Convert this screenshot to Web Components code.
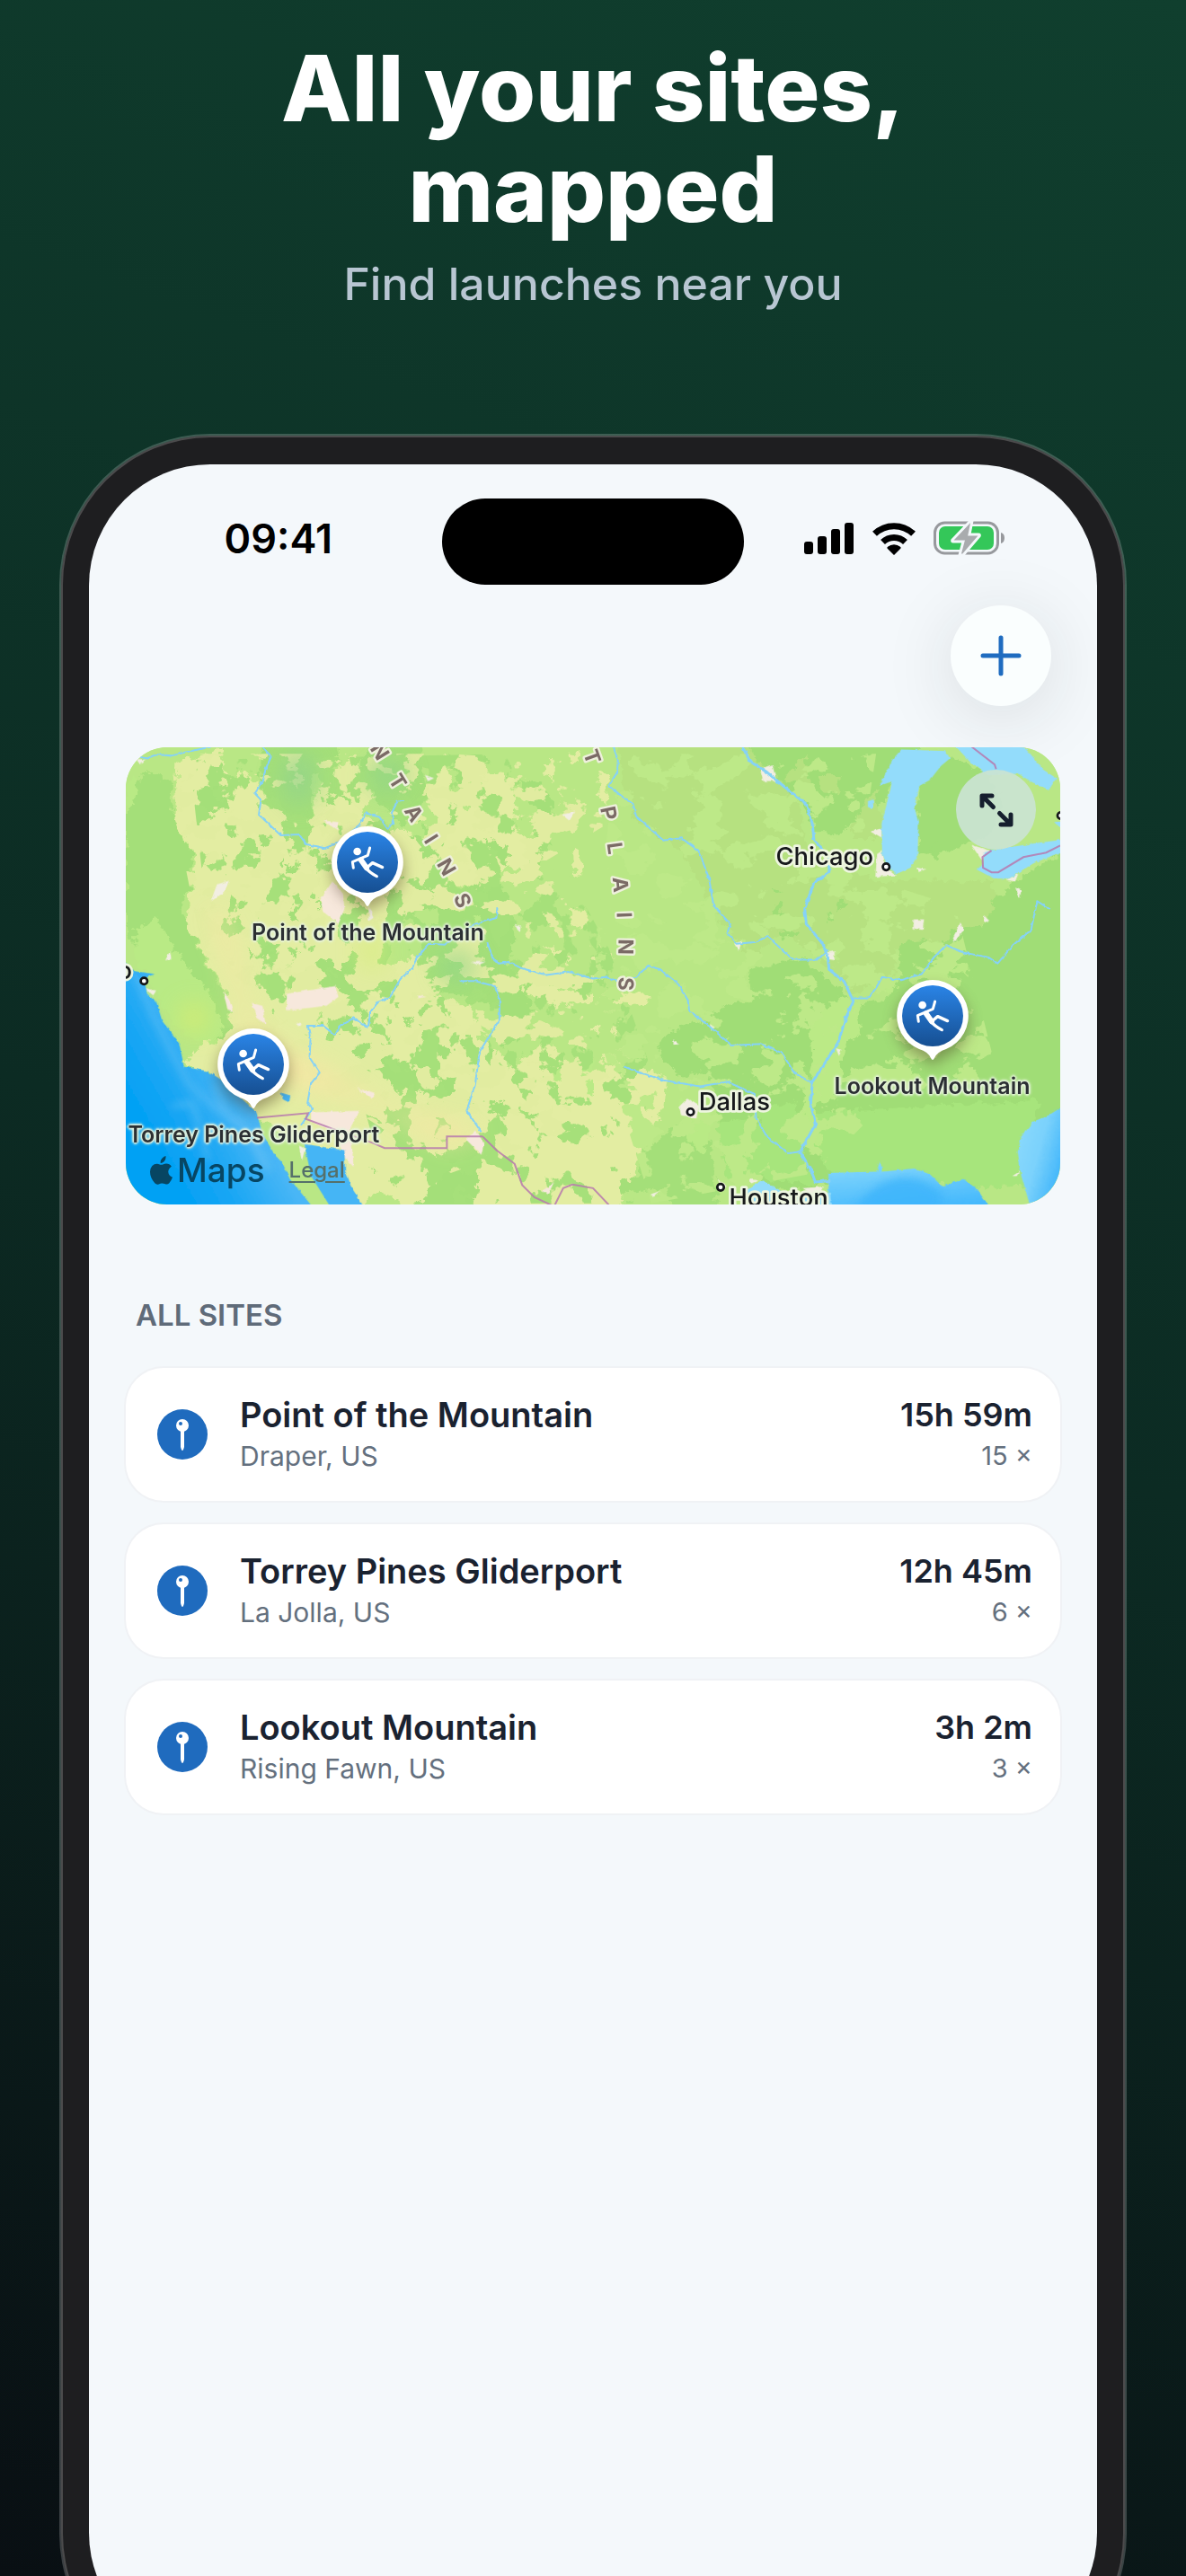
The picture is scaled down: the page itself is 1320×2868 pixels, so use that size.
<!DOCTYPE html>
<html lang="en">
<head>
<meta charset="utf-8">
<meta name="viewport" content="width=device-width, initial-scale=1">
<title>All your sites, mapped</title>
<style>
  body { margin: 0; font-family: Inter, "Liberation Sans", sans-serif; }
</style>
</head>
<body>
<sites-poster>
  <promo-header>
    <span slot="title">All your sites,<br>mapped</span>
    <span slot="subtitle">Find launches near you</span>
  </promo-header>
  <phone-frame>
    <status-bar time="09:41"></status-bar>
    <app-toolbar></app-toolbar>
    <site-map>
      <map-pin style="left:25.9%;top:25.2%">Point of the Mountain</map-pin>
      <map-pin style="left:13.7%;top:69.4%">Torrey Pines Gliderport</map-pin>
      <map-pin style="left:86.3%;top:58.7%">Lookout Mountain</map-pin>
    </site-map>
    <site-list heading="ALL SITES">
      <site-row place="Draper, US" hours="15h 59m" flights="15 ×">Point of the Mountain</site-row>
      <site-row place="La Jolla, US" hours="12h 45m" flights="6 ×">Torrey Pines Gliderport</site-row>
      <site-row place="Rising Fawn, US" hours="3h 2m" flights="3 ×">Lookout Mountain</site-row>
    </site-list>
  </phone-frame>
</sites-poster>

<script>
class View extends HTMLElement {
  constructor() {
    super();
    this.attachShadow({ mode: 'open' }).innerHTML = this.render();
  }
  render() { return '<slot></slot>'; }
}

customElements.define('sites-poster', class extends View {
  render() {
    return `
<style>
  :host {
    display: flex; flex-direction: column; align-items: center;
    height: 100vh; overflow: hidden; box-sizing: border-box;
    background: linear-gradient(200deg, #103f2e 0%, #0c2b23 50%, #090f13 100%);
  }
</style>
<slot></slot>`;
  }
});

customElements.define('promo-header', class extends View {
  render() {
    return `
<style>
  :host { display: flex; flex-direction: column; gap: 20px; padding: 42px 40px 137px; text-align: center; }
  h1 { margin: 0; font-size: 102px; line-height: 112px; font-weight: 800; color: #fff; }
  p { margin: 0; font-size: 50px; line-height: 60px; font-weight: 500; color: #b8c6d2; }
</style>
<h1><slot name="title"></slot></h1>
<p><slot name="subtitle"></slot></p>`;
  }
});

customElements.define('phone-frame', class extends View {
  render() {
    return `
<style>
  :host {
    display: block; flex: none; width: 90%; box-sizing: border-box; padding: 32px 31px;
    border-radius: 168px; border: 2px solid rgba(255,255,255,.2);
    background: #1e1e20; background-clip: padding-box;
    box-shadow: inset 0 0 0 2px #4b4b4c;
  }
  main {
    display: flex; flex-direction: column; aspect-ratio: 1320 / 2868; box-sizing: border-box;
    padding: 38px 41px 0; border-radius: 135px; background: #f4f8fb; overflow: hidden;
  }
</style>
<main><slot></slot></main>`;
  }
});

customElements.define('status-bar', class extends View {
  render() {
    return `
<style>
  :host { display: grid; grid-template-columns: 1fr 336px 1fr; align-items: center; height: 96px; color: #000; }
  time { justify-self: end; margin-right: 122px; padding-bottom: 6px; font-size: 45px; line-height: 56px; font-weight: 600; }
  .island { height: 96px; border-radius: 48px; background: #000; }
  .icons { display: flex; align-items: center; gap: 19px; padding: 0 0 8px 66px; }
  svg { display: block; flex: none; }
</style>
<time>${this.getAttribute('time')}</time>
<div class="island"></div>
<div class="icons">
  <svg width="57" height="36" viewBox="0 0 57 36" aria-hidden="true">
    <rect x="1" y="22" width="10" height="14" rx="3"/><rect x="16" y="16" width="10" height="20" rx="3"/>
    <rect x="31" y="8" width="10" height="28" rx="3"/><rect x="46" y="1" width="10" height="35" rx="3"/>
  </svg>
  <svg width="50" height="37" viewBox="0 0 50 37" aria-hidden="true">
    <path d="M25 37 17.500 29.500Q17 28.500 18 27.700A11 11 0 0 1 32 27.700Q33 28.500 32.500 29.500Z"/>
    <path d="M12.500 22.500A18 18 0 0 1 37.500 22.500" fill="none" stroke="#000" stroke-width="7"/>
    <path d="M3.500 13.300A31 31 0 0 1 46.500 13.300" fill="none" stroke="#000" stroke-width="7"/>
  </svg>
  <svg width="80" height="38" viewBox="0 0 80 38" aria-hidden="true">
    <rect x="1.500" y="2" width="70" height="34" rx="11" fill="none" stroke="#97999d" stroke-width="3"/>
    <path d="M75 13Q79 14 79 19T75 25Z" fill="#97999d"/>
    <rect x="6" y="6" width="61" height="26" rx="7" fill="#34c759"/>
    <path d="M41 0 21 21Q20 23 22 23H33L29 38H33L51 17Q52 15 50 15H40L43 0Z" fill="#a9abae" stroke="#f4f8fb" stroke-width="3"/>
  </svg>
</div>`;
  }
});

customElements.define('app-toolbar', class extends View {
  render() {
    return `
<style>
  :host { display: flex; justify-content: flex-end; padding: 23px 10px 46px 0; }
  button {
    display: grid; place-items: center; width: 112px; height: 112px; padding: 0; border: 0; border-radius: 50%;
    background: #fafefe; color: #1f6cc0; box-shadow: 0 12px 80px rgba(30,40,40,.13);
  }
</style>
<button type="button" aria-label="Add site">
  <svg width="46" height="46" viewBox="0 0 46 46" fill="none" stroke="currentColor" stroke-width="5" stroke-linecap="round"><path d="M23 3V43M3 23H43"/></svg>
</button>`;
  }
});

customElements.define('map-pin', class extends View {
  render() {
    return `
<style>
  :host {
    position: absolute; display: flex; flex-direction: column; align-items: center; width: 320px;
    margin: -40px 0 0 -160px; font-size: 25px; line-height: 32px; font-weight: 600; color: #2b2f33;
  }
  svg { display: block; overflow: visible; filter: drop-shadow(0 8px 8px rgba(60,40,20,.4)); }
  span {
    margin-top: 12px; white-space: nowrap;
    text-shadow: 0 0 2px #eef6e4, 2px 0 2px #e6f2dccc, -2px 0 2px #e6f2dccc, 0 2px 2px #e6f2dccc, 0 -2px 2px #e6f2dccc, 0 0 5px #e6f2dc;
  }
</style>
<svg width="80" height="90" viewBox="0 0 80 90" aria-hidden="true">
  <defs><linearGradient id="g" x2="0" y2="1"><stop stop-color="#2a84e6"/><stop offset="1" stop-color="#164f92"/></linearGradient></defs>
  <path d="M40 0A40 40 0 0 1 55 77Q45 80 42 87Q40 91 38 87Q35 80 25 77A40 40 0 0 1 40 0Z" fill="#fff"/>
  <circle cx="40" cy="40" r="34" fill="url(#g)"/>
  <g transform="translate(6 6) scale(.333)" fill="none" stroke="#fff" stroke-linecap="round" stroke-linejoin="round">
    <circle cx="68" cy="66" r="13" fill="#fff" stroke="none"/>
    <path d="M55 121 52 101 80 89 103 79 110 54" stroke-width="9"/>
    <path d="M80 94 99 121" stroke-width="18"/>
    <path d="M96 120Q108 136 133 149M99 121 119 104 152 119" stroke-width="10"/>
  </g>
</svg>
<span><slot></slot></span>`;
  }
});

customElements.define('site-map', class extends View {
  render() {
    return `
<style>
  :host { display: block; position: relative; height: 509px; border-radius: 46px; overflow: hidden; background: #b9e785; }
  .terrain { display: block; width: 100%; height: 100%; }
  text { font-family: Inter, "Liberation Sans", sans-serif; }
  .range text { font-size: 68px; font-weight: 700; fill: #7b6b66; stroke: #eef0dc; stroke-width: 14px; paint-order: stroke; stroke-linejoin: round; }
  .cities text { font-size: 81px; font-weight: 500; fill: #17191c; stroke: #edf5df; stroke-width: 16px; paint-order: stroke; stroke-linejoin: round; }
  .cities circle { fill: #fff; stroke: #15171a; stroke-width: 8px; }
  button {
    position: absolute; top: 25px; right: 27px; display: grid; place-items: center; width: 89px; height: 89px;
    padding: 0; border: 0; border-radius: 50%; background: rgba(202,227,210,.93); color: #161f2e;
  }
  footer { position: absolute; left: 27px; bottom: 14px; display: flex; align-items: center; gap: 27px; }
  .brand { display: flex; align-items: center; gap: 5px; font-size: 37px; line-height: 48px; font-weight: 500; color: #074663; }
  a { font-size: 24px; line-height: 32px; font-weight: 500; color: #55706a; text-underline-offset: 4px; }
</style>
<svg class="terrain" viewBox="30 37 3076 1508" preserveAspectRatio="xMidYMid slice" aria-hidden="true">
  <defs>
    <filter id="rough" x="-5%" y="-5%" width="110%" height="110%">
      <feTurbulence type="fractalNoise" baseFrequency=".035" numOctaves="4" seed="4"/>
      <feDisplacementMap in="SourceGraphic" scale="44" xChannelSelector="R" yChannelSelector="G"/>
    </filter>
    <filter id="coast" x="-5%" y="-5%" width="110%" height="110%">
      <feTurbulence type="fractalNoise" baseFrequency=".06" numOctaves="2" seed="9"/>
      <feDisplacementMap in="SourceGraphic" scale="10" xChannelSelector="R" yChannelSelector="G"/>
    </filter>
    <filter id="scrub" x="0" y="0" width="100%" height="100%" color-interpolation-filters="sRGB">
      <feTurbulence type="fractalNoise" baseFrequency=".011 .009" numOctaves="5" seed="21"/>
      <feColorMatrix values="0 0 0 0 0  0 0 0 0 0  0 0 0 0 0  40 0 0 0 -22.500" result="n"/>
      <feComposite in="SourceGraphic" in2="n" operator="in"/>
    </filter>
    <filter id="steppe" x="0" y="0" width="100%" height="100%" color-interpolation-filters="sRGB">
      <feTurbulence type="fractalNoise" baseFrequency=".009 .012" numOctaves="5" seed="57"/>
      <feColorMatrix values="0 0 0 0 0  0 0 0 0 0  0 0 0 0 0  40 0 0 0 -22.500" result="n"/>
      <feComposite in="SourceGraphic" in2="n" operator="in"/>
    </filter>
    <filter id="soft" x="-50%" y="-50%" width="200%" height="200%"><feGaussianBlur stdDeviation="40"/></filter>
    <filter id="mist" x="-50%" y="-50%" width="200%" height="200%"><feGaussianBlur stdDeviation="14"/></filter>
    <linearGradient id="sea" gradientUnits="userSpaceOnUse" x1="150" y1="1400" x2="430" y2="1240">
      <stop stop-color="#02a1f4"/><stop offset=".4" stop-color="#17a6f4"/><stop offset="1" stop-color="#48b6f6"/>
    </linearGradient>
    <linearGradient id="gulf" x1="0" y1="0" x2=".3" y2="1"><stop stop-color="#8bdafc"/><stop offset="1" stop-color="#45b9fc"/></linearGradient>
    <linearGradient id="east" x2="1" y2=".6"><stop stop-color="#8fdbfc"/><stop offset=".5" stop-color="#7bd2fc"/><stop offset="1" stop-color="#35b0fb"/></linearGradient>
    <clipPath id="pacific"><path d="M30 735 132 880 205 1010 222 1090 340 1130 460 1240 480 1310 640 1545H30Z"/></clipPath>
  </defs>

  <rect x="30" y="37" width="3076" height="1508" fill="#b9e785"/>

  <!-- eastern forests and farmland -->
  <g filter="url(#rough)">
    <path fill="#b6e180" d="M1640 20H2070L2240 210 2280 380 2500 480 2880 480 2920 590 2700 690 2560 700 2560 780 2420 850 2300 720 2200 650 2080 740 1960 560 1860 380 1700 270Z"/>
    <path fill="#a0dd76" d="M2070 20H2680L2560 120 2530 210 2440 280 2380 320H2300L2270 230 2190 160 2120 100Z"/>
    <path fill="#b6e180" d="M2190 150 2260 70 2290 180 2250 160ZM2310 130H2380V190L2320 180ZM2420 300 2500 170 2520 280 2500 340H2420Z"/>
    <path fill="#a0dd76" d="M2640 130 2760 70 2860 120 2920 220 2870 330 2700 400 2640 380 2630 220ZM2950 480 3140 370V1270L2990 1330 2960 1460 2790 1480 2580 1450 2350 1460 2260 1500 2110 1480 2000 1380 1960 1120 1880 1060 1900 960 2000 890 2090 870 2080 770 2250 730 2400 850 2420 900 2540 860 2580 800V680L2640 670 2700 700 2760 640 2860 620Z"/>
    <path fill="#a7e57b" d="M2300 1240 3040 1200 3000 1320 2990 1480 2800 1490 2580 1460 2350 1450 2260 1300ZM1980 1280 2230 1200 2260 1370 2300 1480 2010 1450Z"/>
    <path fill="#bbea86" d="M2280 940 2380 860 2440 880 2450 980 2400 1020 2370 1200 2290 1220 2330 1350 2260 1330 2250 1260 2290 1090ZM2230 1070 2270 1080 2270 1130 2220 1110ZM2740 760 2800 750 2800 790 2740 780ZM2530 1060 2590 1070 2580 1080 2530 1080ZM2540 800 2580 810 2560 850 2530 840Z"/>
    <path fill="#a0dd76" d="M2150 500 2190 510 2190 520 2160 515ZM2160 560 2190 550 2190 590 2175 610ZM2380 540 2400 545 2380 580 2370 570ZM2330 590 2360 590 2345 605ZM2180 630 2240 640 2230 660 2190 660ZM2880 540 2930 530 2930 560 2890 560ZM2670 370 2740 340 2750 360 2690 390ZM1800 980 1960 930 2000 1000 2150 1040 2220 1140 2130 1170 1960 1110 1850 1120 1780 1050ZM1990 1170 2090 1180 2120 1280 2000 1260Z"/>
  </g>

  <!-- arid western plateau -->
  <g filter="url(#rough)">
    <path fill="#e3eda2" d="M200 85 340 50 350 110 390 190 360 230 410 110 460 160 500 210 560 290 640 285 660 180 700 130 780 60 840 200 810 260 900 310 960 310 1000 350 1060 300 1010 180 1080 60 1110 200 1160 250 1200 120 1310 130 1310 300 1370 380 1370 470 1290 430 1220 470 1150 500 1050 520 940 500 970 570 900 650 860 720 900 760 1000 720 1040 850 1170 900 1190 1000 1280 1060 1290 1100 1420 1000 1470 1060 1568 1120 1640 1080 1810 1120 1800 1220 1740 1330 1700 1430 1650 1565H960L860 1490 800 1565 700 1400 460 1250 330 1130 220 1080 280 1010 380 930 350 820 290 730 230 620 240 540 260 400 190 300Z"/>
    <path fill="#e3eda2" d="M1320 780 1480 840 1568 850 1568 870 1440 890 1350 850ZM1500 370 1530 375 1530 470 1510 460ZM1490 570 1550 575 1550 600 1520 650ZM1568 680 1640 730 1600 720ZM1590 120 1620 130 1610 220 1590 200ZM1630 850H1750V885L1640 880ZM1400 690 1470 710 1490 755 1450 720ZM1700 680 1750 690 1740 705 1700 700ZM1568 960 1600 965 1580 990ZM1620 970 1650 960 1640 990ZM140 410 190 435 160 450ZM70 670 110 690 100 720ZM1480 60 1530 50 1520 90ZM1400 90 1440 85 1440 150Z"/>
    <path fill="#a4df79" d="M30 210 100 120 180 150 180 240 210 330 250 390 240 500 210 560 240 640 290 740 350 840 380 960 330 1010 260 980 200 890 130 800 60 700 30 600ZM480 20H750L700 90 650 130 640 280 560 280 520 220 470 170ZM260 180 350 150 370 210 360 250 280 250ZM470 310 510 330 510 360 470 365ZM840 20 1000 20 1020 180 1000 280 930 300 850 200 800 100ZM660 180 700 150 730 190 720 230 680 220ZM700 140 770 220 760 230 710 170ZM535 400 560 410 550 440 535 430ZM560 430 605 425 600 450 570 450ZM650 400 710 390 710 420 670 415Z"/>
    <path fill="#a4df79" d="M900 510 1050 515 1090 540 1160 500 1230 450 1300 540 1310 650 1290 750 1340 830 1370 900 1330 1000 1270 1020 1260 900 1180 870 1130 850 1040 840 1020 760 1000 640 1060 620 1060 570 950 580 940 620 880 640ZM1210 340 1290 370 1280 430 1240 390ZM1100 60 1150 120 1170 250 1130 180ZM1320 150 1390 160 1440 220 1420 290 1370 230ZM1090 270 1130 270 1120 285 1095 285ZM1210 70 1230 85 1200 110ZM960 320 1040 350 1060 400 1020 400Z"/>
    <path fill="#a4df79" d="M430 690 460 730 450 740ZM470 680 530 690 520 730 480 730ZM590 520 610 530 590 620 570 600ZM570 700 600 710 550 790 580 740ZM650 750 700 730 730 780 790 690 820 690 820 770 790 860 720 830 680 850 650 800ZM700 920 760 925 740 970 710 950ZM910 870 940 890 925 900ZM940 930 980 935 960 950ZM1010 930 1050 940 1040 1000 1110 1040 1080 1070 1010 1000ZM780 1020 900 1010 910 1060 1020 1110 1110 1130 1140 1230 1060 1200 1020 1170 920 1170 850 1090 800 1060ZM1060 1380 1170 1330 1200 1400 1170 1565H970L1050 1470ZM1230 1000 1240 1100 1210 1060ZM1230 1200 1290 1210 1280 1250 1230 1240ZM1350 1240 1430 1250 1420 1270 1360 1260ZM830 1410 860 1440 850 1440ZM500 750 530 770 510 800ZM800 900 830 910 820 950ZM1050 880 1070 890 1060 920ZM1730 1370 1800 1320 1860 1260 1950 1330 1980 1565H1840L1810 1490 1660 1510 1650 1470 1720 1450ZM780 540 810 550 800 580 780 570ZM660 540 670 560 660 570Z"/>
    <path fill="#b9ea85" d="M60 640 130 600 180 680 230 760 320 870 350 960 330 1010 240 1000 180 930 130 850 60 720ZM30 160 70 120 60 220 30 250ZM1080 720 1130 720 1110 740ZM1170 590 1200 600 1190 620ZM1390 1050 1470 1080 1568 1070 1568 1180 1480 1160ZM1850 1190 1960 1230 1950 1330 1930 1380 1880 1330Z"/>
  </g>

  <!-- scattered scrub, grassland and woods -->
  <path filter="url(#scrub)" fill="#a6e07a" d="M240 80 1300 60 1400 300 1620 700 1760 1100 1700 1540H900L760 1020 520 960 300 620Z"/>
  <path filter="url(#steppe)" fill="#e1eca0" d="M180 60 780 60 1100 60 1580 90 1600 300 1400 420 1540 640 1640 900 1700 1100 1500 1300 1100 1440 700 1180 420 900 280 700 200 300Z"/>
  <path filter="url(#steppe)" fill="#bde988" d="M1640 60 2500 60 2440 460 2760 560 2900 1120 2500 1240 2300 1440 1760 1540 1560 900Z"/>

  <g filter="url(#soft)" opacity=".75">
    <path d="M300 560 370 620 430 900 500 1000 680 1090 900 1230 1200 1300 1100 1350 800 1200 560 1150 440 1030 380 800Z" fill="#fae5a5"/>
    <circle cx="255" cy="930" r="50" fill="#d9ec70"/>
    <ellipse cx="840" cy="710" rx="40" ry="60" fill="#d7ee7c"/>
    <ellipse cx="600" cy="140" rx="60" ry="90" fill="#93d38c"/>
    <ellipse cx="1120" cy="760" rx="60" ry="50" fill="#92d489"/>
    <ellipse cx="890" cy="130" rx="60" ry="60" fill="#92d489"/>
  </g>

  <!-- salt flats and urban areas -->
  <g filter="url(#coast)" fill="#f2eee2">
    <path fill="#f7e8dc" d="M710 480 745 520 750 570 730 620 680 580 670 540ZM560 850 720 825 730 860 690 890 560 905ZM445 880 480 890 490 950 460 930ZM350 840 370 870 385 910 365 900ZM680 280 730 285 725 310ZM640 1240 800 1235 770 1290 780 1420 750 1390 720 1310 640 1270ZM790 1160 850 1180 840 1195ZM1180 1300 1210 1340 1200 1380 1150 1330ZM1440 1470 1420 1510 1400 1500ZM990 855 1020 860 990 865Z"/>
    <path d="M310 545 330 490 370 478 350 520ZM60 75 95 80 75 95ZM175 710 180 735 160 740ZM1465 260 1510 250 1490 280ZM1015 130 1045 140 1025 150ZM1310 620 1330 630 1325 650ZM90 830 130 840 120 855ZM590 945 610 950 600 960ZM830 560 845 600 830 610ZM1165 745 1215 745 1190 755ZM600 1350 620 1360 610 1400Z"/>
    <g transform="translate(1568)">
      <path d="M550 110 590 95 605 150 560 150ZM915 315 950 305 950 335ZM950 380 960 430 1000 460 930 465 935 390ZM1055 605 1090 605 1085 640 1055 635ZM1210 615 1220 640 1190 680 1185 665ZM1285 590 1305 610 1290 615ZM1245 360 1310 380 1280 410ZM1360 475 1400 455 1390 480ZM1390 500 1410 510 1405 535ZM1095 320 1115 335ZM1065 435 1095 440 1070 450ZM465 685 490 675 480 710ZM765 715 795 710 795 740 770 735ZM385 950 400 960 390 970ZM265 1000 285 1015 265 1020ZM800 1030 818 1035 810 1055ZM285 1220 310 1195 350 1220 340 1260 290 1250ZM410 1460 440 1480 430 1500ZM515 1460 545 1465 520 1475ZM190 1510 220 1500 200 1520ZM1380 1450 1405 1435 1395 1450ZM690 1490 760 1485 740 1520Z"/>
    </g>
  </g>

  <!-- seas and lakes -->
  <g filter="url(#coast)">
    <path fill="url(#sea)" d="M10 725 55 775 125 785 90 800 100 850 132 880 150 940 205 1010 222 1090 300 1105 340 1130 460 1240 480 1310 520 1380 545 1405 570 1460 660 1570H10Z"/>
    <path fill="#45b5f5" d="M618 1345 750 1365 752 1430 775 1490 825 1570H715L640 1450ZM540 1175 572 1185 568 1208 548 1198Z"/>
    <g transform="translate(1568)">
      <path fill="#93dcfb" d="M943 165 985 80 1015 45 1160 50 1175 75 1145 100 1110 145 1075 165 1058 235 1072 290 1068 395 1045 435 1000 455 970 430 952 395 950 290 968 220 985 150ZM905 215 925 210 920 240 905 235ZM1180 20H1400L1440 60 1480 110 1525 140 1500 180 1440 150 1400 125 1300 130 1240 85ZM1262 440 1285 425 1285 385 1320 375 1450 355 1560 340V375L1450 420 1370 470 1320 470ZM1520 285 1560 280 1545 305Z"/>
      <path fill="url(#gulf)" d="M775 1440 935 1435 945 1400 955 1435 1060 1425 1110 1445 1150 1485 1220 1460 1260 1490 1320 1570H775Z"/>
      <path fill="url(#east)" d="M1560 1212 1500 1250 1450 1270 1410 1320 1398 1370 1410 1450 1445 1570H1565Z"/>
      <path fill="#93dcfb" d="M490 1500 560 1465 590 1480 620 1500 700 1510 780 1505 790 1570H500Z"/>
    </g>
  </g>
  <g clip-path="url(#pacific)" filter="url(#mist)" fill="none" stroke="#7cc9f8" stroke-width="14" opacity=".55">
    <path d="M60 780 120 920 190 1060 240 1150 320 1220 420 1280 500 1420"/><path d="M320 1150 370 1260 420 1290 500 1440M180 1220 250 1210 300 1400"/>
  </g>
  <path d="M2420 1570Q2480 1480 2560 1460T2720 1510L2700 1570Z" fill="#3cb4fb" filter="url(#mist)" opacity=".8"/>

  <!-- rivers -->
  <g fill="none" stroke="#86d2f6" stroke-width="6" stroke-linejoin="round" filter="url(#coast)">
    <path d="M65 68 100 75 130 62 180 66 220 56 310 37M482 37 508 70 490 110 482 150 455 190 475 212 468 260 540 328 600 325 625 358 685 370 725 355 800 295 820 255 865 268 890 305 912 290 905 255 925 215 945 212"/>
    <path d="M605 1285 645 1230 628 1210 640 1145 668 1110 635 1060 638 1000 630 955 680 955 718 985 735 955 780 930 828 960 835 910 860 878 900 860 935 800 975 765 985 735 1030 685 1080 688 1180 620 1250 600 1253 565"/>
    <path d="M1220 680 1240 740 1260 750 1290 745 1330 765 1415 788 1490 778 1568 800 1610 795 1650 808 1710 795 1750 757 1790 770 1850 820 1880 870 1885 905 1960 965 2025 1020 2120 1015 2190 1045 2230 1110 2290 1145"/>
    <path d="M1132 808 1180 808 1245 825 1260 860 1260 935 1195 1040 1180 1150 1152 1235 1200 1305"/>
    <path d="M1635 37 1650 80 1648 120 1620 165 1670 205 1700 225 1710 265 1800 345 1860 338 1915 378 1950 470 1965 560 2020 620 2010 650 2040 685 2100 680 2145 662 2200 715 2230 738 2305 738 2345 705"/>
    <path d="M2060 37 2085 85 2140 120 2200 170 2270 225 2290 290 2295 340 2345 400 2345 450 2295 485 2265 570 2270 620 2320 680 2340 720 2345 770 2395 810 2425 875 2400 930 2375 1010 2330 1080 2290 1140 2285 1210 2300 1280 2250 1370 2285 1430 2300 1470 2350 1465" stroke-width="9"/>
    <path d="M2425 865 2475 865 2500 830 2520 795 2580 805 2650 785 2690 730 2730 690 2790 715 2870 730 2900 750 2950 690 3010 640 3030 545 3070 570M1670 1090 1710 1105 1800 1135 1920 1155 2010 1140 2100 1180 2105 1260 2140 1320 2210 1375 2250 1370"/>
  </g>

  <!-- borders -->
  <g fill="none" stroke="#b779ae" stroke-width="6" opacity=".85">
    <path d="M462 1258 630 1243 622 1262 720 1298 840 1340 882 1358H1087V1320H1205M1205 1320 1250 1365 1310 1410 1335 1480 1375 1520 1440 1550 1470 1490 1500 1478 1568 1490 1620 1545"/>
    <path d="M2815 37 2890 95 2895 110M2880 378 2850 400 2852 435 2880 450 2902 450 2985 400 3060 385 3106 362"/>
  </g>

  <g class="range">
    <text x="832 893 945 1010 1052 1108" y="42 145 247 345 422 531" rotate="58 58 58 58 60 68">NTAINS</text>
    <text x="1535" y="57" rotate="70">T</text>
    <text x="1592 1614 1632 1646 1652 1654" y="239 355 467 582 669 794" rotate="78 82 85 88 91 93">PLAINS</text>
  </g>
  <g class="cities">
    <text x="2170" y="427">Chicago</text><circle cx="2533" cy="432" r="11"/>
    <text x="1916" y="1234">Dallas</text><circle cx="1889" cy="1239" r="11"/>
    <text x="2016" y="1550">Houston</text><circle cx="1988" cy="1487" r="11"/>
    <text x="2" y="800">o</text><circle cx="90" cy="808" r="11"/>
    <circle cx="3108" cy="263" r="11"/>
  </g>
</svg>
<footer>
  <span class="brand">
    <svg width="25" height="32" viewBox="0 0 25 32" fill="#074663" aria-hidden="true">
      <path d="M17.500 0Q18 4 15.500 6.300T11.700 8Q11.300 4.800 13.500 2.500T17.500 0ZM18 8.500Q21.800 8.600 23.900 11.700 20 14.300 20.300 18 20.700 22.200 25 23.800 23.800 27.400 21.300 30.200 19.500 32.200 17 31.300 14.700 30.300 12.900 30.500 11.700 30.600 9.600 31.400 7.200 32.200 5.300 30.200 0 24.500 0 17.600 0 13.700 2.400 11 4.800 8.500 7.900 8.700 9.200 8.800 10.700 9.400 12.500 10.100 14.300 9.400 16.400 8.500 18 8.500Z"/>
    </svg>
    <span>Maps</span>
  </span>
  <a href="#legal">Legal</a>
</footer>
<slot></slot>
<button type="button" aria-label="Expand map">
  <svg width="38" height="38" viewBox="0 0 38 38" fill="none" stroke="currentColor" stroke-width="5" stroke-linecap="round" stroke-linejoin="round">
    <path d="M15.500 15.500 4 4M3 14V3H14M22.500 22.500 34 34M35 24V35H24"/>
  </svg>
</button>`;
  }
});

customElements.define('site-list', class extends View {
  render() {
    return `
<style>
  :host { display: block; padding-top: 103px; }
  h2 { margin: 0 0 39px 11px; font-size: 33px; line-height: 40px; font-weight: 600; color: #5f6b79; }
  .rows { display: flex; flex-direction: column; gap: 26px; }
</style>
<section>
  <h2>${this.getAttribute('heading')}</h2>
  <div class="rows"><slot></slot></div>
</section>`;
  }
});

customElements.define('site-row', class extends View {
  render() {
    return `
<style>
  :host {
    display: flex; align-items: center; box-sizing: border-box; height: 148px; padding: 0 31px 0 35px;
    border-radius: 42px; background: #fff; box-shadow: 0 0 0 2px #f0f2f5;
  }
  .badge { display: block; flex: none; width: 56px; height: 56px; margin-right: 36px; }
  .info { flex: 1; }
  .stats { text-align: right; }
  b { display: block; font-size: 38px; line-height: 48px; font-weight: 600; color: #1a2230; }
  small { display: block; font-size: 30px; line-height: 44px; font-weight: 400; color: #64707e; }
  .stats b { font-size: 36px; }
  .stats small { font-size: 29px; }
</style>
<svg class="badge" viewBox="0 0 56 56" aria-hidden="true">
  <circle cx="28" cy="28" r="28" fill="#1f6bbe"/>
  <path d="M26 20h4v22q-1 4-2 4t-2-4Z" fill="#fff"/><circle cx="28" cy="18" r="7" fill="#fff"/><circle cx="26" cy="16" r="2" fill="#1f6bbe"/>
</svg>
<div class="info"><b><slot></slot></b><small>${this.getAttribute('place')}</small></div>
<div class="stats"><b>${this.getAttribute('hours')}</b><small>${this.getAttribute('flights')}</small></div>`;
  }
});
</script>
</body>
</html>
